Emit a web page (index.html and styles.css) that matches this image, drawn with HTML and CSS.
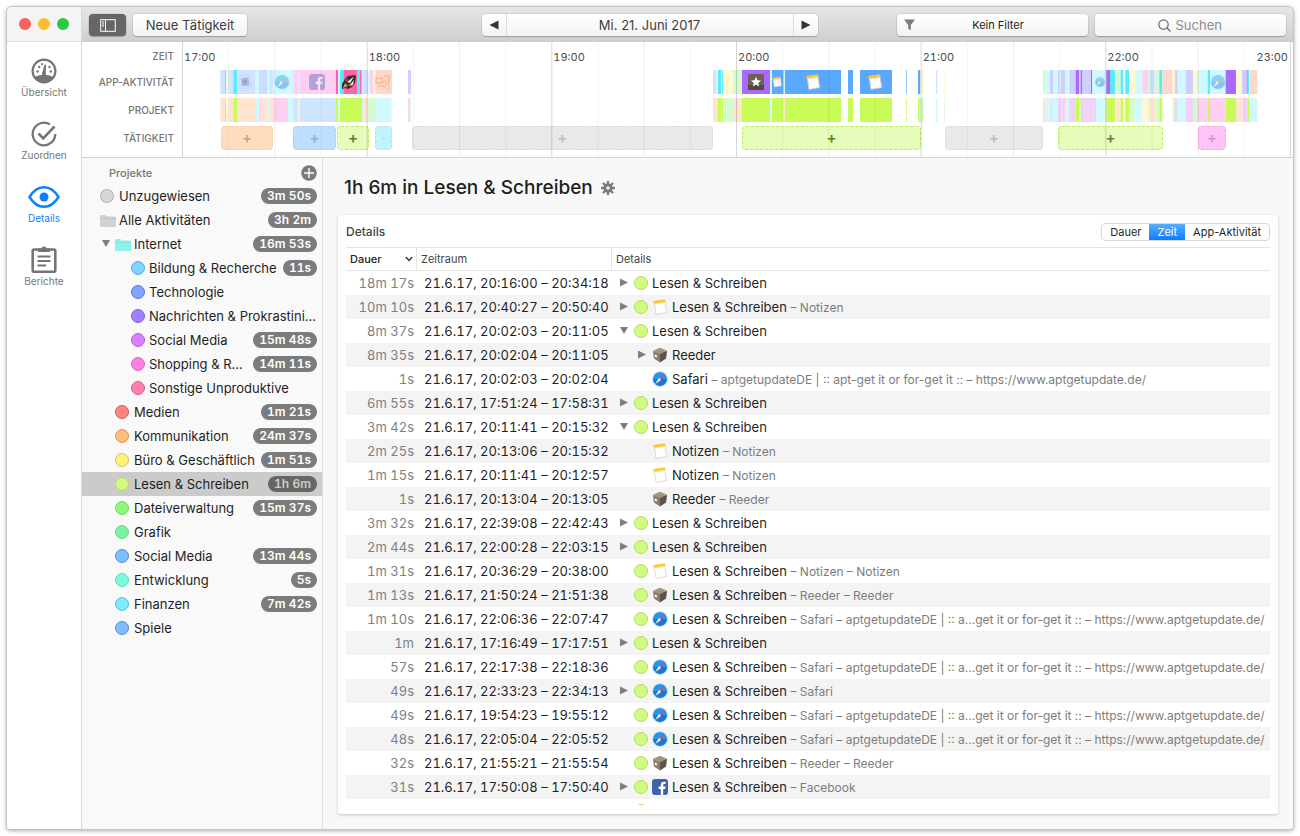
FILE: index.html
```html
<!DOCTYPE html>
<html lang="de">
<head>
<meta charset="utf-8">
<title>Details – Lesen &amp; Schreiben</title>
<link rel="stylesheet" href="styles.css">
</head>
<body>
<svg class="symbols" aria-hidden="true">
  <symbol id="i-notes" viewBox="0 0 16 16">
    <path d="M2.2 2.6 12.6 1l2 12.6L4 15.4z" fill="#fefdfb" stroke="#d9d2cc" stroke-width=".8"/>
    <path d="M1.4 2 12.8.4l.5 2.8L1.8 5z" fill="#fdc72e"/>
    <path d="M2 5.2 13.2 3.5" stroke="#e9e0d0" stroke-width=".8"/>
  </symbol>
  <symbol id="i-reeder" viewBox="0 0 16 16">
    <path d="M8 .8 15 3.8 8 6.8 1 3.8z" fill="#a3927f"/>
    <path d="M1 3.8 8 6.8v8.6L1.9 11.6z" fill="#8b7c6c"/>
    <path d="M15 3.8 8 6.8v8.6l6.1-3.8z" fill="#5f5448"/>
    <path d="M3.9 7l.5 1.200 1.200.5-1 .8.2 1.300-1.100-.8-1 .3.4-1.200-.6-1.100 1 .1z" fill="#fff"/>
  </symbol>
  <symbol id="i-safari" viewBox="0 0 16 16">
    <circle cx="8" cy="8" r="7.3" fill="#2196f0" stroke="#c9d6e2" stroke-width=".8"/>
    <path d="M8 14.8A6.8 6.8 0 0 0 14.8 8L1.2 8A6.8 6.8 0 0 0 8 14.8z" fill="#1a76dd"/>
    <path d="M12.8 3 9 9 7 7z" fill="#f1483c"/>
    <path d="M3.2 13 7 7l2 2z" fill="#fff"/>
  </symbol>
  <symbol id="i-facebook" viewBox="0 0 16 16">
    <rect width="16" height="16" rx="3" fill="#3f63a8"/>
    <path d="M8.8 16V10H6.6V7.6h2.2V6.1c0-2.2 1.2-3.3 3.1-3.3.8 0 1.5.1 1.7.1v2.1h-1.2c-1 0-1.2.5-1.2 1.2v1.4h2.3L13.2 10h-2v6z" fill="#fff"/>
  </symbol>
  <symbol id="i-stamp" viewBox="0 0 16 16">
    <path d="M2 2.5 12.5 1.2 14 13 3.6 14.6z" fill="#fff" stroke="#a9aed0" stroke-width=".8"/>
    <path d="M3.6 4 11.6 3l1 8.6L4.7 12.8z" fill="#6d83cc"/>
    <circle cx="8" cy="7.6" r="2.3" fill="#3d4680"/>
  </symbol>
  <symbol id="i-rocket" viewBox="0 0 16 16">
    <path d="M1 10 4 5l3-3 7-1 1 1-1 7-3 4-4 2-3-1-3 1z" fill="#332c33"/>
    <path d="M6 8 13 2.400 9 9z" fill="#f6efe6"/>
    <path d="M8 12l5-6-1 5z" fill="#efe4d8"/>
    <path d="M2 14l2-5 3 3z" fill="#f59433"/>
    <path d="M4 6.500 7 4 6 7.500z M7 11l3-2-1 3z" fill="#dc4b35"/>
  </symbol>
  <symbol id="i-cart" viewBox="0 0 16 16">
    <path d="M1 4h6v5H1zM9 2h5v8M3 12h10" fill="none" stroke="#e6953c" stroke-width="1.400"/>
    <path d="M8 6h5v4H8z" fill="#efb878"/>
    <circle cx="12" cy="12.500" r="2" fill="#fff" stroke="#cc8a55"/>
  </symbol>
  <symbol id="i-star" viewBox="0 0 16 16">
    <rect width="16" height="16" rx="1" fill="#6e6053"/>
    <path d="M0 11h16v5H0z" fill="#54483e"/>
    <path d="m8 2.800 1.400 3.500 3.700.2-2.900 2.400 1 3.700L8 10.500l-3.200 2.100 1-3.700-2.900-2.400 3.700-.2z" fill="#fff"/>
  </symbol>
  <symbol id="i-right" viewBox="0 0 12 12"><path d="M2 1.500v8l8-4z" fill="#7d7d7d"/></symbol>
  <symbol id="i-down" viewBox="0 0 12 12"><path d="M2 2h8l-4 7z" fill="#7d7d7d"/></symbol>
  <symbol id="i-folder" viewBox="0 0 16 13"><path d="M0 2q0-1 1-1h4.500l1 1.500H15q1 0 1 1V12q0 1-1 1H1q-1 0-1-1z" fill="currentColor"/><path d="M0 4.300h16" stroke="#000" stroke-opacity=".1" stroke-width=".7"/></symbol>
</svg>

<div class="window">
  <nav class="rail">
    <div class="lights"><i class="light close"></i><i class="light minimise"></i><i class="light zoom"></i></div>
    <div class="rail-items">
      <a class="rail-item" href="#uebersicht">
        <svg viewBox="0 0 28 28"><circle cx="14" cy="14" r="11.400" fill="none" stroke="#757575" stroke-width="2.200"/><path d="M4.500 20q9.500-5 19 0Q20 25.500 14 25.500T4.500 20z" fill="#757575"/><path d="M14.500 7.500 16 7.800 15.800 16a2 2 0 1 1-3.400-.7z" fill="#757575"/><g fill="#757575"><circle cx="7.500" cy="14.500" r="1.200"/><circle cx="9.200" cy="10" r="1.200"/><circle cx="12" cy="7.200" r="1.100"/><circle cx="19.500" cy="10" r="1.200"/><circle cx="20.800" cy="14.500" r="1.200"/></g></svg>
        <span>Übersicht</span></a>
      <a class="rail-item" href="#zuordnen">
        <svg viewBox="0 0 28 28" fill="none" stroke="#757575" stroke-width="2.300"><path d="M20 4.400A11.300 11.300 0 1 0 25.300 14"/><path d="m8.500 13.500 4.700 4.800L24.500 6.500" stroke-width="2.600"/></svg>
        <span>Zuordnen</span></a>
      <a class="rail-item active" href="#details">
        <svg class="eye" viewBox="0 0 32 28"><path d="M1.500 14Q7.500 4.200 16 4.200T30.500 14Q24.500 23.800 16 23.800T1.500 14z" fill="none" stroke="#0a80ff" stroke-width="2.400"/><circle cx="16" cy="14" r="4.500" fill="#0a80ff"/></svg>
        <span>Details</span></a>
      <a class="rail-item" href="#berichte">
        <svg viewBox="0 0 28 28"><rect x="2.700" y="3.500" width="22.600" height="22.300" rx="1.500" fill="none" stroke="#757575" stroke-width="2.600"/><path d="M8 2.500h3.200a3 3 0 0 1 5.600 0H20V6H8z" fill="#757575"/><path d="M7.500 10.500h13M7.500 15h13M7.500 19.500h8.500" stroke="#757575" stroke-width="2"/></svg>
        <span>Berichte</span></a>
    </div>
  </nav>

  <div class="content">
    <header class="toolbar">
      <div class="tool-group">
        <button class="btn toggle" type="button" aria-label="Seitenleiste"><svg width="16" height="13" viewBox="0 0 16 13" fill="none" stroke="#fff"><rect x=".7" y=".7" width="14.600" height="11.600"/><path d="M5.500.5v12M2 3h2M2 5h2M2 7h2"/></svg></button>
        <button class="btn new" type="button">Neue Tätigkeit</button>
      </div>
      <div class="btn date">
        <button type="button" aria-label="Vorheriger Tag"><svg width="10" height="10" viewBox="0 0 10 10"><path d="M9.500.5v9L.5 5z" fill="#333"/></svg></button>
        <button class="day" type="button">Mi. 21. Juni 2017</button>
        <button type="button" aria-label="Nächster Tag"><svg width="10" height="10" viewBox="0 0 10 10"><path d="M.5.5v9L9.500 5z" fill="#333"/></svg></button>
      </div>
      <div class="tool-group end">
        <button class="btn filter" type="button"><svg width="11" height="12" viewBox="0 0 11 12"><path d="M0 .5h11L6.800 6v5.500L4.200 9.500V6z" fill="#7b7b7b"/></svg><span>Kein Filter</span></button>
        <label class="btn search"><svg width="13" height="13" viewBox="0 0 13 13" fill="none" stroke="#6b6b6b" stroke-width="1.200"><circle cx="5.500" cy="5.500" r="4.700"/><path d="m9 9 3.500 3.500"/></svg><input type="text" placeholder="Suchen" aria-label="Suchen"></label>
      </div>
    </header>

    <section class="timeline">
      <div class="track-labels"><span>ZEIT</span><span>APP-AKTIVITÄT</span><span>PROJEKT</span><span>TÄTIGKEIT</span></div>
      <div class="plot">
        <div class="hours"><span>17:00</span><span>18:00</span><span>19:00</span><span>20:00</span><span>21:00</span><span>22:00<b>23:00</b></span></div>
        <div class="track" id="apps"></div>
        <div class="track" id="projects"></div>
        <div class="track" id="tasks"></div>
      </div>
    </section>

    <div class="body">
      <aside class="sidebar">
        <div class="side-head"><span>Projekte</span><button type="button" aria-label="Projekt hinzufügen"><svg width="16" height="16" viewBox="0 0 16 16"><circle cx="8" cy="8" r="7.800" fill="#7a7a7a"/><path d="M8 3v10M3 8h10" stroke="#fff" stroke-width="1.400"/></svg></button></div>
        <ul class="projects">
          <li><button class="item"><i class="dot gray"></i><span>Unzugewiesen</span><em>3m 50s</em></button></li>
          <li><button class="item all"><svg class="folder"><use href="#i-folder"/></svg><span>Alle Aktivitäten</span><em>3h 2m</em></button></li>
          <li><button class="item parent"><svg class="tri"><use href="#i-down"/></svg><svg class="folder aqua"><use href="#i-folder"/></svg><span>Internet</span><em>16m 53s</em></button></li>
          <li><button class="item l2"><i class="dot sky"></i><span>Bildung &amp; Recherche</span><em>11s</em></button></li>
          <li><button class="item l2"><i class="dot indigo"></i><span>Technologie</span></button></li>
          <li><button class="item l2"><i class="dot violet"></i><span>Nachrichten &amp; Prokrastini...</span></button></li>
          <li><button class="item l2"><i class="dot purple"></i><span>Social Media</span><em>15m 48s</em></button></li>
          <li><button class="item l2"><i class="dot pink"></i><span>Shopping &amp; R...</span><em>14m 11s</em></button></li>
          <li><button class="item l2"><i class="dot rose"></i><span>Sonstige Unproduktive</span></button></li>
          <li><button class="item l1"><i class="dot red"></i><span>Medien</span><em>1m 21s</em></button></li>
          <li><button class="item l1"><i class="dot orange"></i><span>Kommunikation</span><em>24m 37s</em></button></li>
          <li><button class="item l1"><i class="dot yellow"></i><span>Büro &amp; Geschäftlich</span><em>1m 51s</em></button></li>
          <li><button class="item l1 selected"><i class="dot lime"></i><span>Lesen &amp; Schreiben</span><em>1h 6m</em></button></li>
          <li><button class="item l1"><i class="dot green"></i><span>Dateiverwaltung</span><em>15m 37s</em></button></li>
          <li><button class="item l1"><i class="dot emerald"></i><span>Grafik</span></button></li>
          <li><button class="item l1"><i class="dot blue"></i><span>Social Media</span><em>13m 44s</em></button></li>
          <li><button class="item l1"><i class="dot mint"></i><span>Entwicklung</span><em>5s</em></button></li>
          <li><button class="item l1"><i class="dot cyan"></i><span>Finanzen</span><em>7m 42s</em></button></li>
          <li><button class="item l1"><i class="dot blue"></i><span>Spiele</span></button></li>
        </ul>
      </aside>

      <main class="main">
        <h1>1h 6m in Lesen &amp; Schreiben
          <button type="button" aria-label="Einstellungen"><svg width="14" height="14" viewBox="0 0 14 14"><g stroke="#7a7a7a" stroke-width="2.400"><path d="M7 0v14M0 7h14M2 2l10 10M12 2 2 12"/></g><circle cx="7" cy="7" r="4.600" fill="#7a7a7a"/><circle cx="7" cy="7" r="1.700" fill="#f9f9f9"/></svg></button>
        </h1>
        <section class="card">
          <div class="card-head">
            <h2>Details</h2>
            <div class="segments"><button type="button">Dauer</button><button class="on" type="button">Zeit</button><button type="button">App-Aktivität</button></div>
          </div>
          <div class="scroll">
            <table>
              <colgroup><col class="c-dur"><col class="c-time"><col></colgroup>
              <thead><tr><th><div class="sort">Dauer<svg width="8" height="6" viewBox="0 0 8 6"><path d="m.8 1 3.200 3.400L7.200 1" fill="none" stroke="#333" stroke-width="1.400"/></svg></div></th><th>Zeitraum</th><th>Details</th></tr></thead>
              <tbody>
                <tr><td>18m 17s</td><td>21.6.17, 20:16:00 – 20:34:18</td><td><div class="cell"><svg class="tri"><use href="#i-right"/></svg><i class="dot lime"></i><span>Lesen &amp; Schreiben</span></div></td></tr>
                <tr><td>10m 10s</td><td>21.6.17, 20:40:27 – 20:50:40</td><td><div class="cell"><svg class="tri"><use href="#i-right"/></svg><i class="dot lime"></i><svg class="app"><use href="#i-notes"/></svg><span>Lesen &amp; Schreiben <small>– Notizen</small></span></div></td></tr>
                <tr><td>8m 37s</td><td>21.6.17, 20:02:03 – 20:11:05</td><td><div class="cell"><svg class="tri"><use href="#i-down"/></svg><i class="dot lime"></i><span>Lesen &amp; Schreiben</span></div></td></tr>
                <tr><td>8m 35s</td><td>21.6.17, 20:02:04 – 20:11:05</td><td><div class="cell nested"><svg class="tri"><use href="#i-right"/></svg><svg class="app"><use href="#i-reeder"/></svg><span>Reeder</span></div></td></tr>
                <tr><td>1s</td><td>21.6.17, 20:02:03 – 20:02:04</td><td><div class="cell nested"><i class="tri"></i><svg class="app"><use href="#i-safari"/></svg><span>Safari <small>– aptgetupdateDE | :: apt-get it or for-get it :: – https://www.aptgetupdate.de/</small></span></div></td></tr>
                <tr><td>6m 55s</td><td>21.6.17, 17:51:24 – 17:58:31</td><td><div class="cell"><svg class="tri"><use href="#i-right"/></svg><i class="dot lime"></i><span>Lesen &amp; Schreiben</span></div></td></tr>
                <tr><td>3m 42s</td><td>21.6.17, 20:11:41 – 20:15:32</td><td><div class="cell"><svg class="tri"><use href="#i-down"/></svg><i class="dot lime"></i><span>Lesen &amp; Schreiben</span></div></td></tr>
                <tr><td>2m 25s</td><td>21.6.17, 20:13:06 – 20:15:32</td><td><div class="cell nested"><i class="tri"></i><svg class="app"><use href="#i-notes"/></svg><span>Notizen <small>– Notizen</small></span></div></td></tr>
                <tr><td>1m 15s</td><td>21.6.17, 20:11:41 – 20:12:57</td><td><div class="cell nested"><i class="tri"></i><svg class="app"><use href="#i-notes"/></svg><span>Notizen <small>– Notizen</small></span></div></td></tr>
                <tr><td>1s</td><td>21.6.17, 20:13:04 – 20:13:05</td><td><div class="cell nested"><i class="tri"></i><svg class="app"><use href="#i-reeder"/></svg><span>Reeder <small>– Reeder</small></span></div></td></tr>
                <tr><td>3m 32s</td><td>21.6.17, 22:39:08 – 22:42:43</td><td><div class="cell"><svg class="tri"><use href="#i-right"/></svg><i class="dot lime"></i><span>Lesen &amp; Schreiben</span></div></td></tr>
                <tr><td>2m 44s</td><td>21.6.17, 22:00:28 – 22:03:15</td><td><div class="cell"><svg class="tri"><use href="#i-right"/></svg><i class="dot lime"></i><span>Lesen &amp; Schreiben</span></div></td></tr>
                <tr><td>1m 31s</td><td>21.6.17, 20:36:29 – 20:38:00</td><td><div class="cell"><i class="tri"></i><i class="dot lime"></i><svg class="app"><use href="#i-notes"/></svg><span>Lesen &amp; Schreiben <small>– Notizen – Notizen</small></span></div></td></tr>
                <tr><td>1m 13s</td><td>21.6.17, 21:50:24 – 21:51:38</td><td><div class="cell"><i class="tri"></i><i class="dot lime"></i><svg class="app"><use href="#i-reeder"/></svg><span>Lesen &amp; Schreiben <small>– Reeder – Reeder</small></span></div></td></tr>
                <tr><td>1m 10s</td><td>21.6.17, 22:06:36 – 22:07:47</td><td><div class="cell"><i class="tri"></i><i class="dot lime"></i><svg class="app"><use href="#i-safari"/></svg><span>Lesen &amp; Schreiben <small>– Safari – aptgetupdateDE | :: a...get it or for-get it :: – https://www.aptgetupdate.de/</small></span></div></td></tr>
                <tr><td>1m</td><td>21.6.17, 17:16:49 – 17:17:51</td><td><div class="cell"><svg class="tri"><use href="#i-right"/></svg><i class="dot lime"></i><span>Lesen &amp; Schreiben</span></div></td></tr>
                <tr><td>57s</td><td>21.6.17, 22:17:38 – 22:18:36</td><td><div class="cell"><i class="tri"></i><i class="dot lime"></i><svg class="app"><use href="#i-safari"/></svg><span>Lesen &amp; Schreiben <small>– Safari – aptgetupdateDE | :: a...get it or for-get it :: – https://www.aptgetupdate.de/</small></span></div></td></tr>
                <tr><td>49s</td><td>21.6.17, 22:33:23 – 22:34:13</td><td><div class="cell"><svg class="tri"><use href="#i-right"/></svg><i class="dot lime"></i><svg class="app"><use href="#i-safari"/></svg><span>Lesen &amp; Schreiben <small>– Safari</small></span></div></td></tr>
                <tr><td>49s</td><td>21.6.17, 19:54:23 – 19:55:12</td><td><div class="cell"><i class="tri"></i><i class="dot lime"></i><svg class="app"><use href="#i-safari"/></svg><span>Lesen &amp; Schreiben <small>– Safari – aptgetupdateDE | :: a...get it or for-get it :: – https://www.aptgetupdate.de/</small></span></div></td></tr>
                <tr><td>48s</td><td>21.6.17, 22:05:04 – 22:05:52</td><td><div class="cell"><i class="tri"></i><i class="dot lime"></i><svg class="app"><use href="#i-safari"/></svg><span>Lesen &amp; Schreiben <small>– Safari – aptgetupdateDE | :: a...get it or for-get it :: – https://www.aptgetupdate.de/</small></span></div></td></tr>
                <tr><td>32s</td><td>21.6.17, 21:55:21 – 21:55:54</td><td><div class="cell"><i class="tri"></i><i class="dot lime"></i><svg class="app"><use href="#i-reeder"/></svg><span>Lesen &amp; Schreiben <small>– Reeder – Reeder</small></span></div></td></tr>
                <tr><td>31s</td><td>21.6.17, 17:50:08 – 17:50:40</td><td><div class="cell"><svg class="tri"><use href="#i-right"/></svg><i class="dot lime"></i><svg class="app"><use href="#i-facebook"/></svg><span>Lesen &amp; Schreiben <small>– Facebook</small></span></div></td></tr>
                <tr><td></td><td></td><td><div class="cell"><i class="tri"></i><i class="dot lime"></i></div></td></tr>
              </tbody>
            </table>
          </div>
        </section>
      </main>
    </div>
  </div>
</div>
<script src="timeline.js"></script>
</body>
</html>
```
FILE: styles.css
```css
* { box-sizing: border-box; }
body { margin: 0; padding: 7px; height: 100vh; background: #fff; color: #1f1f1f; font: 13px/16px Inter, "Liberation Sans", sans-serif; }
button, input { font: inherit; color: inherit; border: 0; background: none; padding: 0; margin: 0; }
button { cursor: pointer; }
svg { display: block; flex: none; }
ul, h1, h2 { margin: 0; padding: 0; list-style: none; }
.symbols { position: absolute; width: 0; height: 0; }

.window { display: flex; height: 100%; overflow: hidden; border-radius: 5px 5px 2px 2px; background: #f8f8f8; box-shadow: 0 0 0 1px #c4c4c4, 0 1px 5px rgba(0, 0, 0, .45); }

/* Navigation rail */
.rail { flex: none; width: 75px; background: #fff; border-right: 1px solid #d9d9d9; }
.lights { display: flex; gap: 7px; align-items: center; height: 35px; padding-left: 12px; background: #f4f4f4; border-bottom: 1px solid #dcdcdc; }
.light { width: 12px; height: 12px; border-radius: 50%; }
.close { background: #fc605b; }
.minimise { background: #fdbc2f; }
.zoom { background: #2cc840; }
.rail-items { display: flex; flex-direction: column; gap: 21px; padding-top: 15px; }
.rail-item { display: flex; flex-direction: column; align-items: center; gap: 1px; color: #757575; font-size: 10px; line-height: 13px; text-decoration: none; }
.rail-item svg { width: 28px; height: 28px; }
.rail-item .eye { width: 32px; }
.rail-item.active { color: #0a80ff; }

.content { flex: 1; min-width: 0; display: flex; flex-direction: column; }

/* Toolbar: the date stays centred on the whole window, rail included */
.toolbar { flex: none; display: grid; grid-template-columns: calc(50% - 206px) 336px 1fr; align-items: center; height: 35px; padding: 1px 7px 0; background: linear-gradient(#e7e5e7, #cfcdcf); }
.tool-group { display: flex; gap: 7px; }
.tool-group.end { justify-content: flex-end; }
.btn { display: flex; align-items: center; justify-content: center; height: 22px; border-radius: 4px; background: linear-gradient(#fff, #f3f3f3); box-shadow: 0 0 0 1px rgba(0, 0, 0, .06), 0 1px 1px rgba(0, 0, 0, .22); color: #3d3d3d; }
.toggle { width: 37px; background: #666567; }
.new { width: 114px; }
.date button { display: flex; align-items: center; justify-content: center; width: 24px; height: 22px; }
.date .day { flex: 1; border: solid #dcdcdc; border-width: 0 1px; }
.filter { width: 191px; padding: 0 7px; font-size: 11px; color: #222; }
.filter span { flex: 1; }
.search { width: 191px; gap: 5px; }
.search input { width: 48px; outline: 0; }
.search input::placeholder { color: #8c8c8c; opacity: 1; }

/* Timeline */
.timeline { flex: none; display: flex; height: 116px; background: #fff; border-bottom: 1px solid #d4d4d4; }
.track-labels { flex: none; width: 100px; padding: 2px 8px 0 0; text-align: right; color: #757575; font-size: 10px; font-weight: 500; line-height: 28px; }
.track-labels span { display: block; }
.track-labels span:first-child { line-height: 24px; }
.plot { flex: 1; min-width: 0; position: relative; display: flex; flex-direction: column; gap: 4px; }
.hours { display: grid; grid-template-columns: repeat(6, 1fr); height: 24px; padding: 7px 3px 0 0; color: #4b4b4b; font-size: 11px; font-variant-numeric: tabular-nums; }
.hours span { display: flex; justify-content: space-between; padding-left: 2px; }
.hours b { font-weight: 400; padding-right: 2px; }
.track { position: relative; height: 24px; }
.stripes { width: 100%; height: 24px; }
.grid-lines { position: absolute; inset: 0; width: 100%; height: 100%; pointer-events: none; }
.mark { position: absolute; top: 4px; width: 16px; height: 16px; transform: translateX(-50%); }
.mark.small { top: 6px; width: 11px; height: 12px; }
.mark.faded { opacity: .4; }
.task { position: absolute; top: 0; height: 24px; border: 1px dashed; border-radius: 4px; font-size: 15px; font-weight: 600; line-height: 20px; text-align: center; }
.task.peach { background: #ffdcbe; border-color: #f8cfac; color: #c7a486; }
.task.blue { background: #bfdeff; border-color: #aacff8; color: #8fb1d6; }
.task.lime { background: #e7fbbb; border-color: #bdef5c; color: #5f802a; }
.task.cyan { background: #bff4ff; border-color: #a7e7f4; color: #7fc3d0; font-size: 8px; }
.task.gray { background: #e9e9e9; border-color: #dadada; color: #bdbdbd; }
.task.pink { background: #ffc4f6; border-color: #f5a6e8; color: #e08fd2; }

.body { flex: 1; min-height: 0; display: flex; }

/* Sidebar */
.sidebar { flex: none; width: 241px; background: #f9f9f9; border-right: 1px solid #dedede; overflow: hidden; }
.side-head { display: flex; justify-content: space-between; align-items: center; height: 26px; padding: 3px 5px 0 27px; color: #757575; font-size: 11px; font-weight: 500; }
.item { display: flex; align-items: center; gap: 5px; width: 100%; height: 24px; padding: 0 5px 0 18px; text-align: left; white-space: nowrap; }
.item.all { gap: 3px; }
.item.l1 { padding-left: 33px; }
.item.l2 { padding-left: 49px; gap: 4px; }
.item.parent { padding-left: 18px; gap: 3px; }
.item span { flex: 1; }
.item em { flex: none; padding: 0 6px; border-radius: 8px; background: #7b7b7b; color: #fff; font-size: 12px; font-style: normal; font-weight: 600; font-variant-numeric: tabular-nums; line-height: 16px; }
.item.selected { background: #cbcbcb; }
.item.selected em { background: #666; color: #cbcbcb; }
.folder { width: 16px; height: 13px; color: #d2d2d2; }
.folder.aqua { color: #8df2e9; }
.tri { flex: none; width: 12px; height: 12px; }

.dot { flex: none; width: 14px; height: 14px; border-radius: 50%; border: 1px solid rgba(0, 0, 0, .14); }
.gray { background-color: #d6d6d6; }
.sky { background-color: #80d4ff; border-color: #56a9dc; }
.indigo { background-color: #80a4ff; border-color: #5878d8; }
.violet { background-color: #a080ff; border-color: #7f5fe0; }
.purple { background-color: #da80ff; border-color: #b55cdc; }
.dot.pink { background-color: #ff80e3; border-color: #e060c0; }
.rose { background-color: #ff80b0; border-color: #dc5a8b; }
.red { background-color: #ff8580; border-color: #dc5a55; }
.orange { background-color: #ffbd80; border-color: #dc9450; }
.yellow { background-color: #fff080; border-color: #d8c450; }
.dot.lime { background-color: #d1fb80; border-color: #b2dc62; }
.green { background-color: #8ff87c; border-color: #70dc60; }
.emerald { background-color: #78f3a0; border-color: #60de8a; }
.dot.blue { background-color: #80bcff; border-color: #4d90e0; }
.mint { background-color: #7df8dc; border-color: #5cdcc0; }
.dot.cyan { background-color: #7eebff; border-color: #50c0dc; }

/* Main area */
.main { flex: 1; min-width: 0; display: flex; flex-direction: column; padding: 18px 15px 15px; }
h1 { display: flex; align-items: center; gap: 8px; padding-left: 6px; font-size: 19px; font-weight: 500; line-height: 24px; }
.card { flex: 1; min-height: 0; display: flex; flex-direction: column; margin-top: 15px; padding: 0 8px 9px; background: #fff; border-radius: 2px; box-shadow: 0 1px 3px rgba(0, 0, 0, .22); }
.card-head { flex: none; display: flex; align-items: center; justify-content: space-between; height: 32px; padding-top: 1px; }
h2 { font-size: 12px; font-weight: 500; line-height: 16px; color: #444; }
.segments { display: flex; border: 1px solid #d6d6d6; border-radius: 4px; overflow: hidden; }
.segments button { padding: 0 8px; font-size: 11px; }
.segments .on { background: linear-gradient(#5aadfb, #0c7cff); color: #fff; }
.scroll { flex: 1; min-height: 0; overflow: hidden; }
table { width: 100%; table-layout: fixed; border-collapse: separate; border-spacing: 0; white-space: nowrap; }
.c-dur { width: 71px; }
.c-time { width: 195px; }
th { height: 24px; padding: 0 4px; border: solid #e4e4e4; border-width: 1px 0; text-align: left; font-size: 11px; font-weight: 400; color: #444; background: linear-gradient(#e4e4e4, #e4e4e4) no-repeat right / 1px 100%; }
th:first-child { color: #222; font-weight: 500; }
th:last-child { background: none; }
.sort { display: flex; align-items: center; justify-content: space-between; }
td { height: 24px; padding: 0; overflow: hidden; }
td:first-child { padding-right: 3px; text-align: right; color: #7f7f7f; }
td:nth-child(2) { padding-left: 7px; }
td:not(:last-child) { font-variant-numeric: tabular-nums; }
tbody tr:nth-child(even) { background: #f4f4f4; }
.cell { display: flex; align-items: center; gap: 4px; padding-left: 6px; }
.nested { padding-left: 24px; }
.app { width: 16px; height: 16px; }
small { font-size: 12px; color: #7d7d7d; }
```
FILE: timeline.js
```js
// The axis runs from 17:00; one hour is 554 units and the plot spans 3333 units.
const ORIGIN = 546, SPAN = 3333;

const COLORS = {
  b: '#cfe4ff', c: '#5ce8ff', y: '#fff8cf', pc: '#cff9fc', lb: '#ccdcff', lav: '#cfcfff',
  pk: '#ffcff2', mg: '#f45fc6', hp: '#ff63a4', sa: '#ffd8cc', g: '#d5fad0', pu: '#a968ff',
  bl: '#5ba8ff', or: '#ffe5d0', li: '#c8fa58', lp: '#f0d2fa'
};

// Each session: start, then colour and length of every block in turn.
const apps = [
  '661 b14 c4 y6 b15 c11 b54 pc12 lb25 pc6 b12 pc60 pk15 b3 pk110 mg6 pc6 c10 hp41 c9 hp5 b20 pc4 pk11 y6 sa50',
  '1224 lav9',
  '2139 b11 y4 c9 pc3 c4 y30 g26 pu84 pc6 bl35 pc4 bl168',
  '2544 bl15', '2580 bl96', '2718 bl2', '2754 bl7 y10', '2808 b4', '2833 y2',
  '3129 g6 pc15 lav9 pc15 lav5 pc3 lav13 pc13 lav19 pu10 lav5 pu4 lav27 pu4 pc42 pu11 c15 g17 c7 pc7 c11 y19 pc21 pk17 g5 lb15 g14 c9 sa31 y7 lav8 pc24 lav22 y12 pc32 c7 pc47 pu31 y18 lav14 pu3 c4 y3 sa22'
];
const projects = [
  '661 or14 li4 y6 or15 li11 or54 pc13 pk6 or18 pc6 or12 pk44 pc16 b15 y3 b110 li6 pc6 li66 pc3 or14 g22 pc50',
  '1224 pk5 g4',
  '2139 or15 li9 pc3 li4 g30 or26 li84 pc6 li35 or4 li168',
  '2544 li15', '2580 li96', '2718 li2', '2754 li5 g12', '2808 pc4', '2833 g2',
  '3129 or6 pc17 lp4 pc18 lp9 or3 lp9 or5 pc7 lp20 li10 g5 li4 lp27 li4 lp11 pc31 li27 or16 li7 y7 li11 g20 pc20 y17 g5 or17 g12 li9',
  '3518 g7 lp8 pc24 lp22 g12 pk32 li7 pk47 li31 or20 lp14 li5 pc25'
];
const marks = [
  [736, 'stamp', 'faded'], [846, 'safari', 'faded'], [950, 'facebook', 'faded'], [1048, 'rocket', ''],
  [1150, 'cart', 'faded'], [2268, 'star', ''], [2332, 'notes', 'small'], [2438, 'notes', ''],
  [2626, 'notes', ''], [3299, 'safari', 'small faded'], [3653, 'safari', 'faded']
];
const tasks = [
  [663, 819, 'peach'], [880, 1008, 'blue'], [1011, 1107, 'lime'], [1126, 1176, 'cyan'],
  [1236, 2138, 'gray'], [2227, 2763, 'lime'], [2835, 3128, 'gray'], [3174, 3489, 'lime'], [3594, 3678, 'pink']
];

const percent = units => (units / SPAN * 100) + '%';
const svg = (cls, height, inner) =>
  `<svg class="${cls}" viewBox="${ORIGIN} 0 ${SPAN} ${height}" preserveAspectRatio="none">${inner}</svg>`;

function stripes(sessions) {
  let out = '';
  for (const session of sessions) {
    const [start, ...blocks] = session.split(' ');
    let x = Number(start);
    for (const block of blocks) {
      const [, color, length] = block.match(/([a-z]+)(\d+)/);
      out += `<rect x="${x}" width="${length}" height="24" fill="${COLORS[color]}"/>`;
      x += Number(length);
    }
  }
  return svg('stripes', 24, out);
}

document.getElementById('apps').innerHTML = stripes(apps) + marks.map(([x, icon, cls]) =>
  `<svg class="mark ${cls}" style="left:${percent(x - ORIGIN)}"><use href="#i-${icon}"/></svg>`).join('');
document.getElementById('projects').innerHTML = stripes(projects);
document.getElementById('tasks').innerHTML = tasks.map(([from, to, cls]) =>
  `<button type="button" class="task ${cls}" style="left:${percent(from - ORIGIN)};width:${percent(to - from)}">${cls === 'cyan' ? '·' : '+'}</button>`).join('');

let lines = '';
for (let i = 0; i <= 24; i++) {
  const alpha = i % 4 === 0 ? .16 : i % 2 === 0 ? .07 : .04;
  lines += `<rect x="${ORIGIN + i * 138.5}" width="3" height="115" fill="#000" fill-opacity="${alpha}"/>`;
}
document.querySelector('.plot').insertAdjacentHTML('beforeend', svg('grid-lines', 115, lines));
```
